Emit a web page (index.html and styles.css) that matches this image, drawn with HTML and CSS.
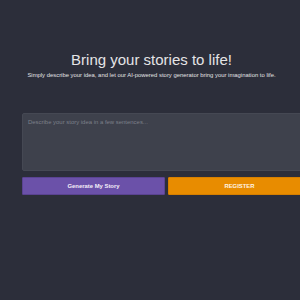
FILE: index.html
```html
<!DOCTYPE html>
<html>
<head>
<meta charset="utf-8">
<link rel="stylesheet" href="styles.css">
</head>
<body>
<main class="page">
  <header class="hero">
    <h1 class="title">Bring your stories to life!</h1>
    <p class="subtitle">Simply describe your idea, and let our AI-powered story generator bring your imagination to life.</p>
  </header>
  <section class="form">
    <textarea class="idea" placeholder="Describe your story idea in a few sentences..."></textarea>
    <div class="actions">
      <button class="btn btn-generate">Generate My Story</button>
      <button class="btn btn-register">REGISTER</button>
    </div>
  </section>
</main>
</body>
</html>
```
FILE: styles.css
```css
html, body {
  margin: 0;
  padding: 0;
  width: 300px;
  height: 300px;
  overflow: hidden;
  background: #2c2e3a;
  font-family: "Liberation Sans", Arial, sans-serif;
}
.page {
  width: 300px;
  padding-top: 51px;
}
.hero {
  text-align: center;
  padding-left: 3px;
}
.title {
  margin: 0;
  font-size: 15px;
  font-weight: normal;
  line-height: 17px;
  color: #e4e4e6;
}
.subtitle {
  margin: 3px 0 0;
  font-size: 5.9px;
  line-height: 8px;
  color: #e2e2e4;
  white-space: nowrap;
}
.form {
  margin: 34px 0 0 22px;
  width: 290px;
  display: flex;
  flex-direction: column;
  gap: 6px;
}
.idea {
  box-sizing: border-box;
  width: 290px;
  height: 58px;
  margin: 0;
  padding: 5px 5px;
  border: 1px solid #454853;
  border-radius: 2px;
  background: #3e414c;
  color: #ddd;
  font-family: "Liberation Sans", Arial, sans-serif;
  font-size: 5.95px;
  resize: none;
  outline: none;
}
.idea::placeholder {
  color: #7d808a;
}
.actions {
  display: flex;
  gap: 3px;
}
.btn {
  box-sizing: border-box;
  width: 143px;
  height: 18px;
  margin: 0;
  padding: 0;
  border-radius: 1px;
  font-family: "Liberation Sans", Arial, sans-serif;
  font-size: 5.9px;
  font-weight: bold;
  color: #f3eef8;
  cursor: pointer;
}
.btn-generate {
  background: #6b51a9;
  border: 1px solid #5a4391;
}
.btn-register {
  background: #e88c00;
  border: 1px solid #d67f00;
  color: #fff4e2;
}
```
